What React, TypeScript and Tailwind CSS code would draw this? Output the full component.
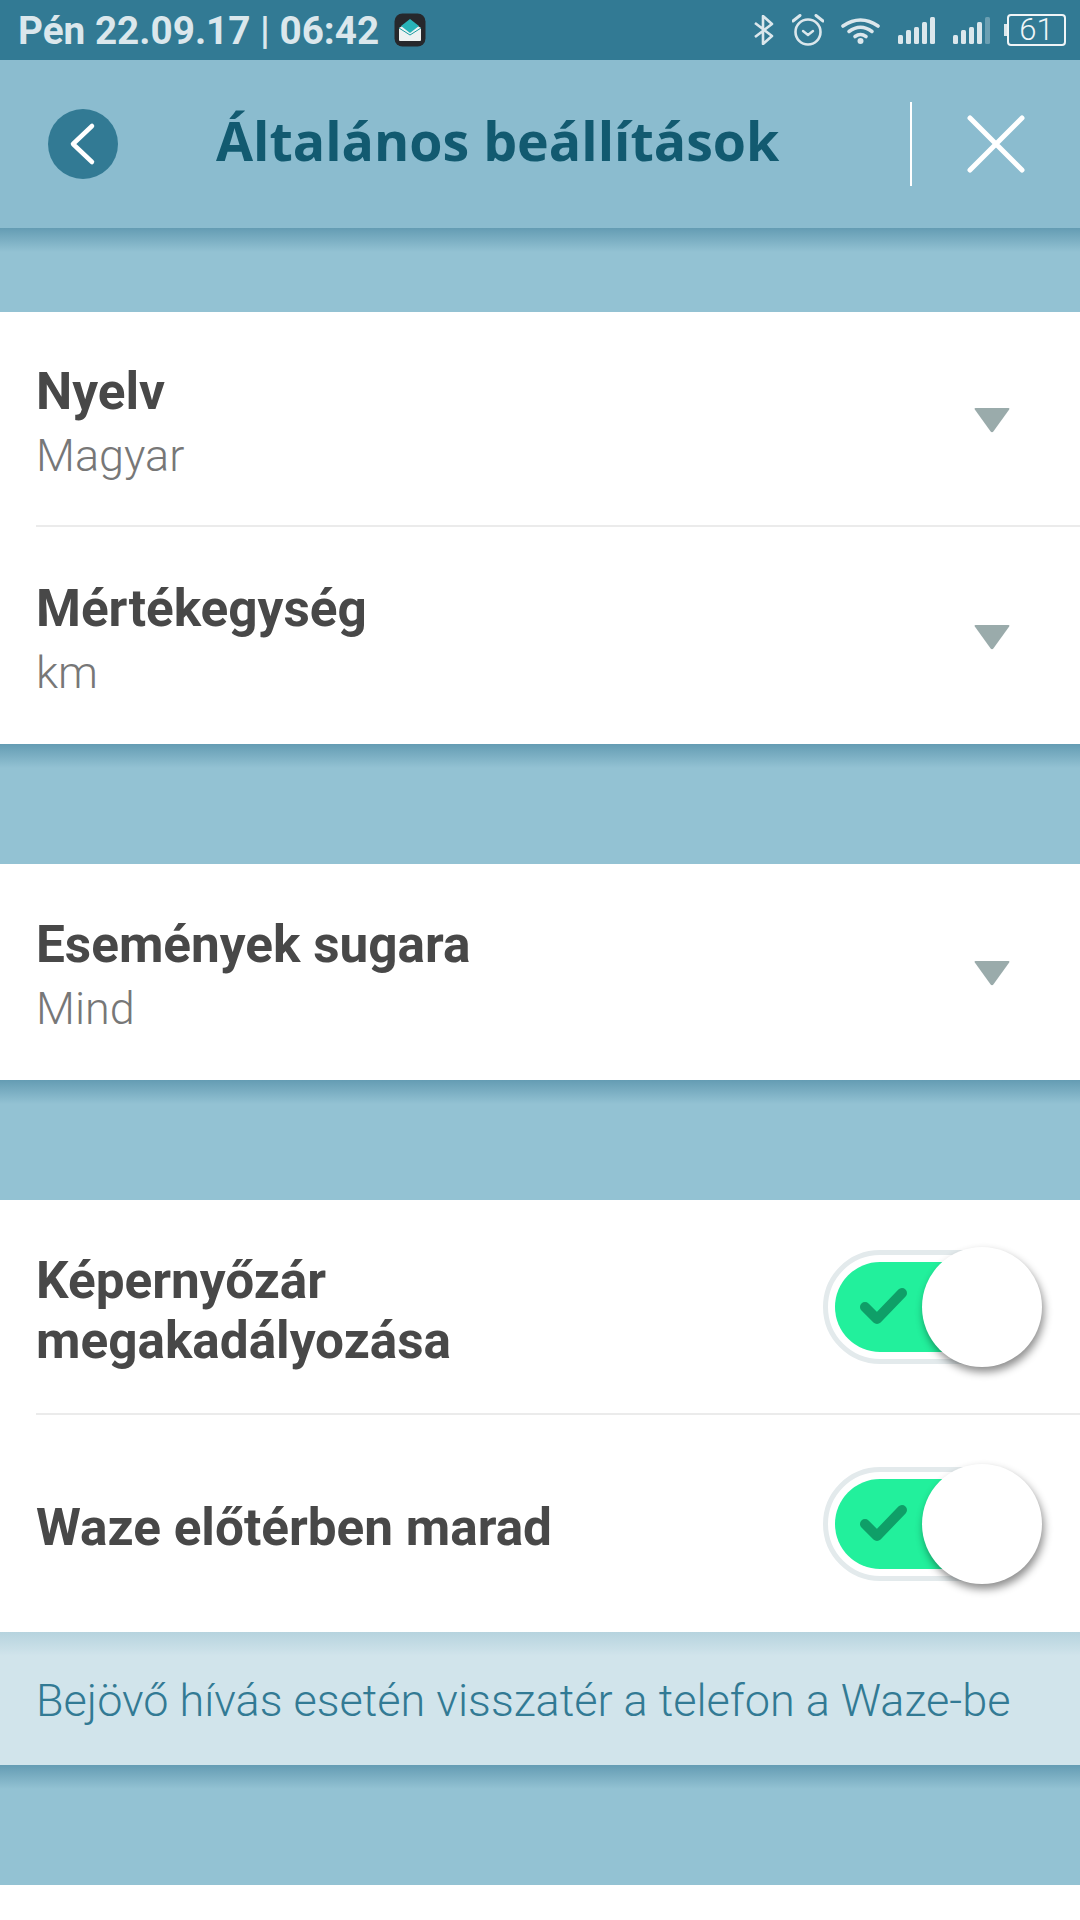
import React from "react";

const roboto = "font-['Roboto',sans-serif]";

function Triangle() {
  return (
    <svg width="36" height="26" viewBox="0 0 35 25" className="shrink-0 translate-y-[1px]">
      <path d="M1.5 0.8 H33.5 Q35 0.8 34.2 2.2 L19 23.5 Q17.5 25.2 16 23.5 L0.8 2.2 Q0 0.8 1.5 0.8 Z" fill="#9aabab" />
    </svg>
  );
}

function Toggle() {
  return (
    <div className="relative w-[219px] h-[120px] shrink-0">
      <div className="absolute left-0 top-[3px] w-[207px] h-[114px] rounded-full border-[5px] border-[#e3eaec] bg-white">
        <div className="absolute left-[7px] top-[7px] w-[170px] h-[90px] rounded-full bg-[#22f09c]">
          <svg width="60" height="50" viewBox="0 0 60 50" className="absolute left-[20px] top-[20px]">
            <path d="M10 25 L22 37 L47 11" fill="none" stroke="#0f9f68" strokeWidth="10" strokeLinecap="round" strokeLinejoin="round" />
          </svg>
        </div>
      </div>
      <div className="absolute right-0 top-0 w-[120px] h-[120px] rounded-full bg-white shadow-[2px_5px_8px_rgba(0,0,0,0.45)]" />
    </div>
  );
}

function Row({ title, sub, className = "" }: { title: string; sub: string; className?: string }) {
  return (
    <div className={`flex items-center justify-between pl-[36px] pr-[70px] ${className}`}>
      <div className="pt-[10px]">
        <div className={`${roboto} font-bold text-[51.3px] leading-[64px] text-[#484848]`}>{title}</div>
        <div className={`${roboto} font-light text-[45px] leading-[64px] text-[#777777]`}>{sub}</div>
      </div>
      <Triangle />
    </div>
  );
}

function Gap({ h }: { h: string }) {
  return <div className={`${h} bg-[linear-gradient(#649cb3_0px,#93c2d3_24px)]`} />;
}

function Divider() {
  return <div className="ml-[36px] h-[2px] bg-[#ebebeb]" />;
}

function Signal({ dim }: { dim?: boolean }) {
  return (
    <svg width="37" height="27" viewBox="0 0 37 27" className="shrink-0">
      <g fill="#dbe7ec">
        <rect x="0" y="18" width="5" height="9" rx="1.5" />
        <rect x="8" y="13" width="5" height="14" rx="1.5" />
        <rect x="16" y="10" width="5" height="17" rx="1.5" />
        <rect x="24" y="5" width="5" height="22" rx="1.5" />
        <rect x="32" y="0" width="5" height="27" rx="1.5" fill={dim ? "#6b9fb2" : "#dbe7ec"} />
      </g>
    </svg>
  );
}

function StatusBar() {
  return (
    <div className="h-[60px] bg-[#327a94] flex items-center pl-[18px]">
      <span className={`${roboto} font-bold text-[38.7px] leading-[60px] pt-[1px] text-[#dbe7ec] whitespace-nowrap`}>Pén 22.09.17 | 06:42</span>
      <svg width="32" height="34" viewBox="0 0 32 34" className="ml-[15px] shrink-0">
        <rect x="0.5" y="0.5" width="31" height="33" rx="8" fill="#26282c" />
        <path d="M5 15 L16 8 L27 15 V27 Q27 28 26 28 H6 Q5 28 5 27 Z" fill="#eef2f2" />
        <path d="M16 6 L25 13 L16 20 L7 13 Z" fill="#27b3b8" />
        <path d="M5 15 L16 22 L27 15" fill="none" stroke="#1d9ca1" strokeWidth="1" />
      </svg>
      <div className="ml-auto flex items-center pr-[14px]">
        <svg width="20" height="30" viewBox="0 0 20 30" className="shrink-0">
          <path d="M1 8 L18 21 L9 29 V1 L18 9 L1 22" fill="none" stroke="#dbe7ec" strokeWidth="2.6" strokeLinejoin="round" />
        </svg>
        <svg width="32" height="32" viewBox="0 0 32 32" className="ml-[18px] shrink-0">
          <circle cx="16" cy="18" r="12.5" fill="none" stroke="#dbe7ec" strokeWidth="2.6" />
          <path d="M11 17 L16 21 L21 17" fill="none" stroke="#dbe7ec" strokeWidth="2.4" strokeLinecap="round" strokeLinejoin="round" />
          <path d="M1 7 L8 1.5 M31 7 L24 1.5" fill="none" stroke="#dbe7ec" strokeWidth="3" strokeLinecap="round" />
        </svg>
        <svg width="39" height="27" viewBox="0 0 39 27" className="ml-[17px] shrink-0">
          <g fill="none" stroke="#dbe7ec" strokeWidth="3.6" strokeLinecap="round">
            <path d="M2 9 Q19.5 -3 37 9" />
            <path d="M8 14.5 Q19.5 6 31 14.5" />
            <path d="M14 19.5 Q19.5 15.5 25 19.5" />
          </g>
          <circle cx="19.5" cy="24" r="3" fill="#dbe7ec" />
        </svg>
        <div className="ml-[18px] mt-[1px]"><Signal /></div>
        <div className="ml-[18px] mt-[1px]"><Signal dim /></div>
        <div className="ml-[14px] w-[3px] h-[12px] bg-[#dbe7ec] shrink-0" />
        <div className={`w-[59px] h-[32px] rounded-[4px] border-[2px] border-[#f0f5f7] flex items-center justify-center ${roboto} font-light text-[31px] leading-[28px] text-[#f0f5f7]`}>61</div>
      </div>
    </div>
  );
}

function Header() {
  return (
    <div className="h-[168px] bg-[#8bbccf] flex items-center pl-[48px]">
      <div className="w-[70px] h-[70px] rounded-full bg-[#327a94] flex items-center justify-center shrink-0">
        <svg width="30" height="44" viewBox="0 0 30 44">
          <path d="M24 4 L5 22 L24 40" fill="none" stroke="#ffffff" strokeWidth="4.5" strokeLinecap="round" strokeLinejoin="round" />
        </svg>
      </div>
      <div className="ml-[98px] pb-[6px] font-['Open_Sans',sans-serif] font-bold text-[53.7px] leading-[64px] text-[#125a70] whitespace-nowrap">Általános beállítások</div>
      <div className="ml-auto w-[2px] h-[84px] bg-white shrink-0" />
      <svg width="60" height="60" viewBox="0 0 60 60" className="ml-[54px] mr-[54px] shrink-0">
        <path d="M4 4 L56 56 M56 4 L4 56" fill="none" stroke="#ffffff" strokeWidth="5" strokeLinecap="round" />
      </svg>
    </div>
  );
}

export default function App() {
  return (
    <div className="w-[1080px] h-[1920px] overflow-hidden bg-white flex flex-col">
      <StatusBar />
      <Header />
      <Gap h="h-[84px]" />
      <div className="bg-white">
        <Row title="Nyelv" sub="Magyar" className="h-[213px]" />
        <Divider />
        <Row title="Mértékegység" sub="km" className="h-[217px]" />
      </div>
      <Gap h="h-[120px]" />
      <Row title="Események sugara" sub="Mind" className="h-[216px] bg-white" />
      <Gap h="h-[120px]" />
      <div className="bg-white">
        <div className="h-[213px] flex items-center justify-between pl-[36px] pr-[38px]">
          <div className={`${roboto} font-bold text-[51.3px] leading-[60px] pt-[8px] text-[#484848]`}>
            Képernyőzár
            <br />
            megakadályozása
          </div>
          <Toggle />
        </div>
        <Divider />
        <div className="h-[217px] flex items-center justify-between pl-[36px] pr-[38px]">
          <div className={`${roboto} font-bold text-[51.3px] leading-[60px] pt-[8px] text-[#484848]`}>Waze előtérben marad</div>
          <Toggle />
        </div>
      </div>
      <div className="h-[133px] flex items-center pl-[36px] bg-[linear-gradient(#b6d3de_0px,#d1e4eb_24px)]">
        <span className={`${roboto} font-light text-[45px] leading-[60px] pt-[4px] text-[#327a94] whitespace-nowrap`}>Bejövő hívás esetén visszatér a telefon a Waze-be</span>
      </div>
      <Gap h="h-[120px]" />
      <div className="flex-1 bg-white" />
    </div>
  );
}
